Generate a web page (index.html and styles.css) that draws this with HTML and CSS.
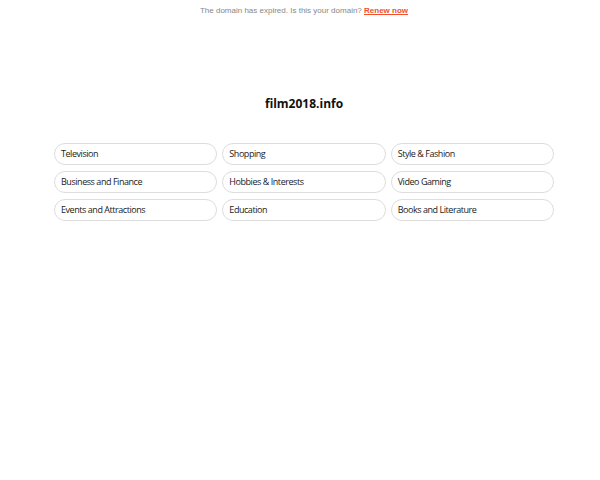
FILE: index.html
```html
<!DOCTYPE html>
<html lang="en">
<head>
    <meta charset="UTF-8">
    <meta name="viewport" content="width=device-width, initial-scale=1.0">
    <title>film2018.info</title>
    <link rel="stylesheet" href="styles.css">
</head>
<body>
    <div class="page">
        <div class="notice">
            The domain has expired. Is this your domain? <a href="#" class="renew">Renew now</a>
        </div>

        <h1 class="domain">film2018.info</h1>

        <ul class="links">
            <li><a href="#">Television</a></li>
            <li><a href="#">Shopping</a></li>
            <li><a href="#">Style &amp; Fashion</a></li>
            <li><a href="#">Business and Finance</a></li>
            <li><a href="#">Hobbies &amp; Interests</a></li>
            <li><a href="#">Video Gaming</a></li>
            <li><a href="#">Events and Attractions</a></li>
            <li><a href="#">Education</a></li>
            <li><a href="#">Books and Literature</a></li>
        </ul>
    </div>
</body>
</html>
```

FILE: styles.css
```css
body {
    margin: 0;
    padding: 0;
    background-color: #fff;
    font-family: "Open Sans", sans-serif;
    color: #222;
}

.page {
    padding-left: 8px;
}

.notice {
    font-family: "Liberation Sans", Arial, sans-serif;
    font-size: 8px;
    color: #888;
    text-align: center;
    padding-top: 5px;
    line-height: 11px;
}

.renew {
    color: #f0502d;
    font-weight: bold;
}

.domain {
    margin: 80px 0 0;
    text-align: center;
    font-size: 12px;
    font-weight: bold;
    line-height: 16px;
    color: #111;
}

.links {
    list-style: none;
    margin: 31px auto 0;
    padding: 0;
    width: 500px;
    display: grid;
    grid-template-columns: repeat(3, 1fr);
    gap: 6px 5px;
}

.links a {
    display: block;
    height: 22px;
    line-height: 20px;
    padding: 0 6px;
    border: 1px solid #ddd;
    border-radius: 11px;
    box-sizing: border-box;
    font-size: 9px;
    letter-spacing: -0.45px;
    color: #1a1a1a;
    text-decoration: none;
}
```
